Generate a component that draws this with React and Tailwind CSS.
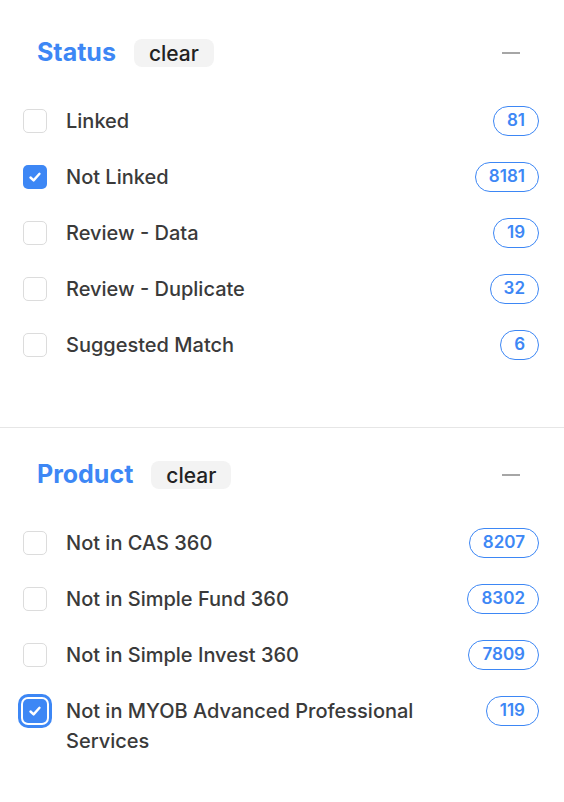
import { useState } from "react";

const statusItems = [
  { id: "linked", label: "Linked", count: 81, checked: false },
  { id: "not-linked", label: "Not Linked", count: 8181, checked: true },
  { id: "review-data", label: "Review - Data", count: 19, checked: false },
  { id: "review-dup", label: "Review - Duplicate", count: 32, checked: false },
  { id: "suggested", label: "Suggested Match", count: 6, checked: false },
];

const productItems = [
  { id: "cas", label: "Not in CAS 360", count: 8207, checked: false },
  { id: "sf", label: "Not in Simple Fund 360", count: 8302, checked: false },
  { id: "si", label: "Not in Simple Invest 360", count: 7809, checked: false },
  { id: "myob", label: "Not in MYOB Advanced Professional Services", count: 119, checked: true, focused: true },
];

function Checkbox({ checked, focused, onClick }) {
  return (
    <button
      onClick={onClick}
      className={
        "mt-[3px] w-[24px] h-[24px] shrink-0 rounded-[5px] flex items-center justify-center " +
        (checked ? "bg-[#3d87f5] " : "bg-white border border-[#dcdcdc] ") +
        (focused ? "ring-[3px] ring-[#3d87f5] ring-offset-[2px]" : "")
      }
    >
      {checked && (
        <svg width="14" height="14" viewBox="0 0 14 14" fill="none">
          <path d="M2.5 7.5 L5.6 10.4 L11.5 3.8" stroke="white" strokeWidth="2.4" strokeLinecap="round" strokeLinejoin="round" />
        </svg>
      )}
    </button>
  );
}

function FilterRow({ item, onToggle }) {
  return (
    <div className="flex items-start py-[13px]">
      <Checkbox checked={item.checked} focused={item.focused} onClick={onToggle} />
      <span className="ml-[19px] flex-1 text-[20px] font-medium leading-[30px] text-[#3a3a3a] pr-[40px]">{item.label}</span>
      <span className="h-[30px] px-[13px] rounded-full border border-[#3d87f5] text-[#3d87f5] text-[17px] font-semibold flex items-center">
        {item.count}
      </span>
    </div>
  );
}

function Section({ title, items, setItems, className }) {
  const toggle = (id) =>
    setItems(items.map((i) => (i.id === id ? { ...i, checked: !i.checked } : i)));
  const clear = () => setItems(items.map((i) => ({ ...i, checked: false })));

  return (
    <div className={className}>
      {/* header */}
      <div className="flex items-center h-[28px] pl-[37px] pr-[44px]">
        <h2 className="text-[25px] font-bold text-[#3d87f5]">{title}</h2>
        <button onClick={clear} className="ml-[18px] h-[28px] px-[15px] rounded-[8px] bg-[#f3f3f3] text-[21px] font-medium text-[#222] leading-none">
          clear
        </button>
        <div className="ml-auto w-[18px] h-[2px] bg-[#a6a6a6]" />
      </div>
      <div className="mt-[26px] pl-[23px] pr-[25px]">
        {items.map((item) => (
          <FilterRow key={item.id} item={item} onToggle={() => toggle(item.id)} />
        ))}
      </div>
    </div>
  );
}

export default function App() {
  const [status, setStatus] = useState(statusItems);
  const [product, setProduct] = useState(productItems);

  return (
    <div className="w-[564px] h-[802px] bg-white overflow-hidden" style={{ fontFamily: "Inter, 'Liberation Sans', sans-serif" }}>
      <Section title="Status" items={status} setItems={setStatus} className="pt-[39px] pb-[54px] border-b border-[#e6e6e6]" />
      <Section title="Product" items={product} setItems={setProduct} className="pt-[33px]" />
    </div>
  );
}
